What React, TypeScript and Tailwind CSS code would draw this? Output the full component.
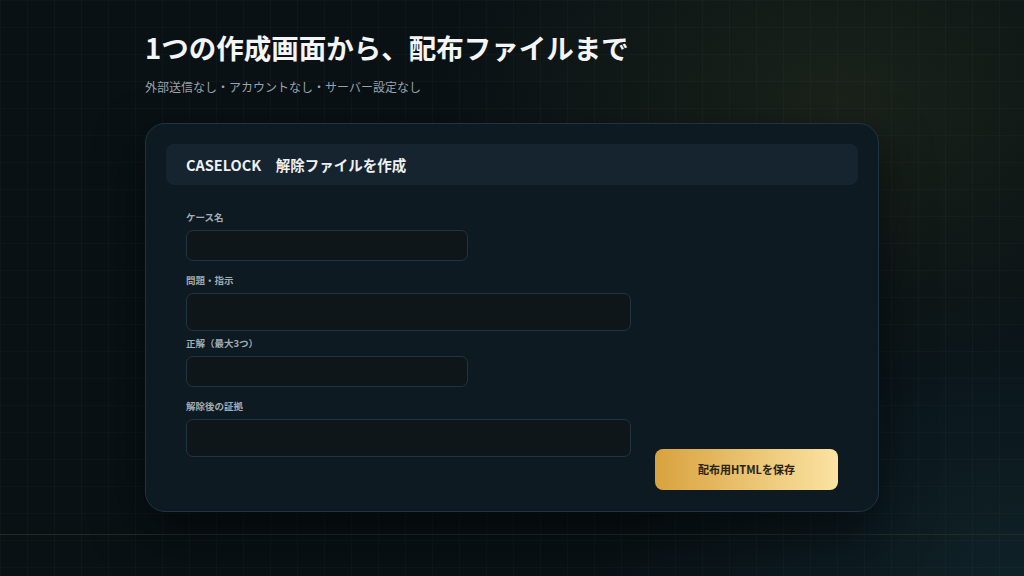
const fields = [
  { label: "ケース名", width: "w-[282px]", height: "h-[31px]", mt: "mt-0" },
  { label: "問題・指示", width: "w-[445px]", height: "h-[38px]", mt: "mt-[13px]" },
  { label: "正解（最大3つ）", width: "w-[282px]", height: "h-[31px]", mt: "mt-[6px]" },
  { label: "解除後の証拠", width: "w-[445px]", height: "h-[38px]", mt: "mt-[13px]" },
];

const App = () => {
  return (
    <div className="min-h-[576px] w-full bg-[#091115] bg-[linear-gradient(rgba(255,255,255,0.018)_1px,transparent_1px),linear-gradient(90deg,rgba(255,255,255,0.018)_1px,transparent_1px),radial-gradient(ellipse_400px_280px_at_840px_100px,rgba(40,48,30,0.55),transparent),radial-gradient(ellipse_420px_300px_at_1024px_576px,rgba(20,50,58,0.5),transparent)] bg-[size:27px_27px,27px_27px,100%_100%,100%_100%] font-['Noto_Sans_CJK_JP','Noto_Sans',sans-serif] text-white">
      <div className="h-[535px] border-b border-[#232c22]">
        <div className="ml-[145px] w-[734px] pt-[30px]">
          <h1 className="text-[27.5px] font-bold leading-[35px] text-[#f3f5f6]">
            1つの作成画面から、配布ファイルまで
          </h1>
          <p className="mt-[13px] text-[12px] leading-[18px] text-[#9aa3ab]">
            外部送信なし・アカウントなし・サーバー設定なし
          </p>

          <div className="mt-[27px] rounded-[20px] border border-[#1f3440] bg-[#0d1a21] px-[20px] pt-[20px] pb-[21px] shadow-[0_20px_50px_rgba(0,0,0,0.55)]">
            <div className="flex h-[41px] items-center rounded-[8px] bg-[#162430] px-[20px] text-[14.5px] font-bold text-[#eef1f3]">
              CASELOCK　解除ファイルを作成
            </div>

            <div className="flex items-end justify-between px-[20px] pt-[26px]">
              <div className="flex flex-col pb-[33px]">
                {fields.map((f) => (
                  <div key={f.label} className={`flex flex-col ${f.mt}`}>
                    <label className="text-[9.5px] font-semibold leading-[13px] text-[#a3acb4]">
                      {f.label}
                    </label>
                    <div
                      className={`mt-[6px] ${f.width} ${f.height} rounded-[7px] border border-[#203440] bg-[#0f1619]`}
                    />
                  </div>
                ))}
              </div>
              <button className="h-[41px] w-[183px] rounded-[8px] bg-[linear-gradient(90deg,#d8a23e,#fbe3a2)] text-[11px] font-bold text-[#2a2112]">
                配布用HTMLを保存
              </button>
            </div>
          </div>
        </div>
      </div>
      <div className="h-[41px]" />
    </div>
  );
};

export default App;
